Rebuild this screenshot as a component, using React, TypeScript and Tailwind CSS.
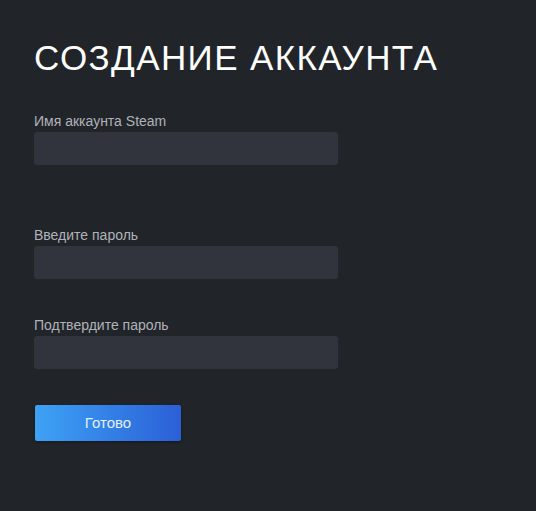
import React from 'react';

const Field = ({ label, type = 'text' }: { label: string; type?: string }) => (
    <div className="flex flex-col">
        <label className="text-[14px] leading-[16px] text-[#afb3b9]">{label}</label>
        <input type={type} className="mt-[3px] w-[304px] h-[33px] rounded-[3px] bg-[#31343c] outline-none px-3 text-white" />
    </div>
);

export default function App() {
    return (
        <div className="min-h-[511px] w-full bg-[#212429] pl-[34px] pt-[38px] font-['Liberation_Sans',Arial,sans-serif]">
            <h1 className="text-[35px] leading-[40px] tracking-[1.4px] text-white font-normal">СОЗДАНИЕ АККАУНТА</h1>
            <div className="mt-[35px]">
                <Field label="Имя аккаунта Steam" />
            </div>
            <div className="mt-[62px]">
                <Field label="Введите пароль" type="password" />
            </div>
            <div className="mt-[38px]">
                <Field label="Подтвердите пароль" type="password" />
            </div>
            <button className="ml-px mt-[36px] w-[146px] h-[36px] rounded-[2px] bg-gradient-to-r from-[#3ea2f5] to-[#2c5fd6] text-[15px] text-[#e4efff] shadow-[0_1px_3px_rgba(0,0,0,0.4)]">
                Готово
            </button>
        </div>
    );
}
